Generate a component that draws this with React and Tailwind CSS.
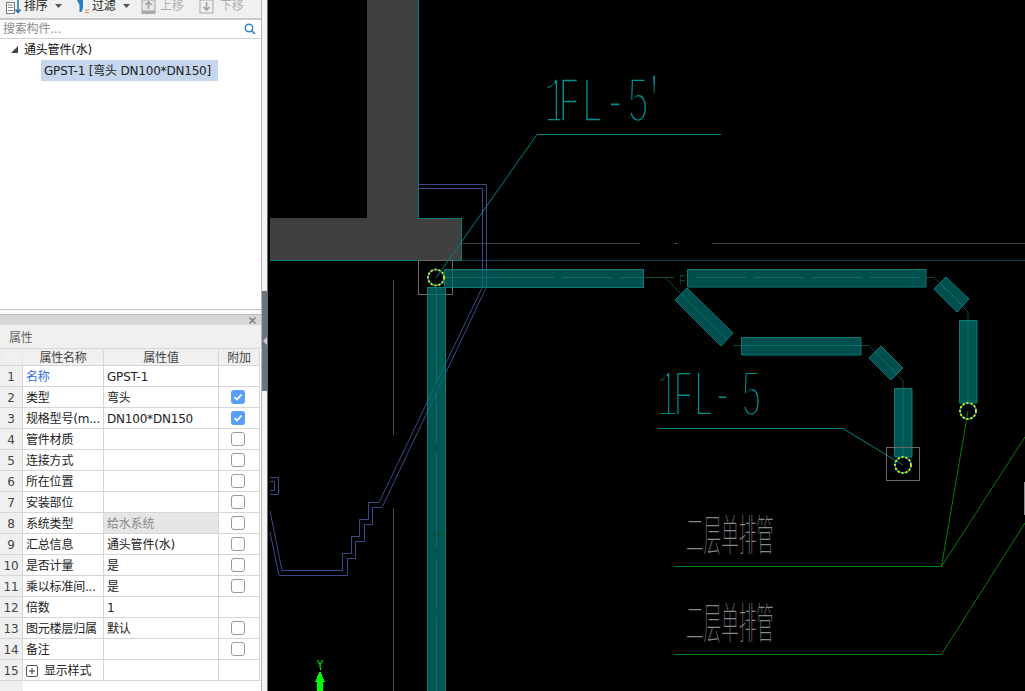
import React from "react";

const FONT = { fontFamily: '"DejaVu Sans","Noto Sans CJK SC",sans-serif', letterSpacing: "-0.2px" };

const rows = [
  ["1", "名称", "GPST-1", null, true],
  ["2", "类型", "弯头", true],
  ["3", "规格型号(m...", "DN100*DN150", true],
  ["4", "管件材质", "", false],
  ["5", "连接方式", "", false],
  ["6", "所在位置", "", false],
  ["7", "安装部位", "", false],
  ["8", "系统类型", "给水系统", false, false, true],
  ["9", "汇总信息", "通头管件(水)", false],
  ["10", "是否计量", "是", false],
  ["11", "乘以标准间...", "是", false],
  ["12", "倍数", "1", null],
  ["13", "图元楼层归属", "默认", false],
  ["14", "备注", "", false],
  ["15", "显示样式", "", null],
];

function Check({ on }) {
  if (on)
    return (
      <span className="flex h-[14px] w-[14px] items-center justify-center rounded-[3px] bg-[#5ba0f8]">
        <svg width="10" height="10" viewBox="0 0 10 10"><path d="M1.5 5.2 4 7.5 8.5 2.5" fill="none" stroke="#fff" strokeWidth="1.8" /></svg>
      </span>
    );
  return <span className="block h-[14px] w-[14px] rounded-[3px] border border-[#999] bg-white" />;
}

function Toolbar() {
  return (
    <div className="h-[20px] shrink-0 overflow-hidden border-b-2 border-[#c9c9c9] bg-[#f0f0f0] text-[12px] text-[#222]">
      <div className="-mt-[3px] flex h-[18px] items-center">
        <svg className="ml-[5px]" width="17" height="18" viewBox="0 0 17 18">
          <rect x="1.5" y="5.5" width="8" height="11" fill="#fff" stroke="#777" />
          <path d="M3 13.5h5M3 10.5h5M3 8h5" stroke="#888" />
          <path d="M13 3v12M10.5 12.5 13 15.5l2.5-3" fill="none" stroke="#2a6fb0" strokeWidth="1.5" />
        </svg>
        <span className="ml-[2px] w-[24px]">排序</span>
        <svg className="ml-[7px]" width="7" height="4" viewBox="0 0 7 4"><path d="M0 0h7L3.5 4z" fill="#555" /></svg>
        <svg className="ml-[15px]" width="13" height="18" viewBox="0 0 13 18">
          <path d="M0 3h6v8l-1.5 4h-2V8z" fill="#2a7fc0" />
          <path d="M8 13h4M8 15.5h4" stroke="#e08a30" />
        </svg>
        <span className="ml-[2px] w-[24px]">过滤</span>
        <svg className="ml-[7px]" width="7" height="4" viewBox="0 0 7 4"><path d="M0 0h7L3.5 4z" fill="#555" /></svg>
        <svg className="ml-[11px]" width="15" height="18" viewBox="0 0 15 18">
          <rect x="1" y="3" width="13" height="11" fill="#e6e6e6" stroke="#a8a8a8" />
          <path d="M7.5 12V5M4.5 8l3-3 3 3" fill="none" stroke="#a0a0a0" strokeWidth="1.6" />
          <rect x="0.5" y="14" width="14" height="3" fill="#a8a8a8" />
        </svg>
        <span className="ml-[4px] w-[24px] text-[#b0b0b0]">上移</span>
        <svg className="ml-[15px]" width="15" height="18" viewBox="0 0 15 18">
          <rect x="1" y="3" width="13" height="13" fill="#eee" stroke="#a8a8a8" />
          <path d="M7.5 5v8M4.5 10l3 3 3-3" fill="none" stroke="#a0a0a0" strokeWidth="1.6" />
        </svg>
        <span className="ml-[6px] w-[24px] text-[#b0b0b0]">下移</span>
      </div>
    </div>
  );
}

function TopPanel() {
  return (
    <div className="flex h-[310px] shrink-0 flex-col border-b border-[#c4c4c4] bg-white">
      <Toolbar />
      <div className="flex h-[19px] shrink-0 items-center justify-between border-b border-[#d0d0d0] pl-[3px] pr-[5px] text-[12px] text-[#8a8a8a]">
        <span>搜索构件...</span>
        <svg width="12" height="12" viewBox="0 0 12 12"><circle cx="5" cy="5" r="3.7" fill="none" stroke="#2d86c4" strokeWidth="1.5" /><path d="M7.8 7.8 11 11" stroke="#2d86c4" strokeWidth="1.7" /></svg>
      </div>
      <div className="flex h-[21px] items-center pl-[11px] text-[12px] text-[#111]">
        <svg width="7" height="7" viewBox="0 0 7 7"><path d="M7 0v7H0z" fill="#444" /></svg>
        <span className="ml-[6px]">通头管件(水)</span>
      </div>
      <div className="ml-[41px] flex h-[21px] w-[177px] items-center whitespace-nowrap bg-[#c5d6ee] pl-[3px] text-[12px] text-[#222]">
        GPST-1 [弯头 DN100*DN150]
      </div>
    </div>
  );
}

function PropRow({ r }) {
  const [n, name, val, chk, blue, shade] = r;
  return (
    <div className="flex h-[21px] border-b border-[#d6d6d6] text-[12px] text-[#222]">
      <div className="flex w-[23px] shrink-0 items-center justify-center border-r border-[#d6d6d6] bg-[#f0f0f0] pt-[2px] text-[#444]">{n}</div>
      <div className={"flex w-[81px] shrink-0 items-center overflow-hidden whitespace-nowrap border-r border-[#d6d6d6] pl-[3px] pt-[2px] " + (blue ? "text-[#2f6fe0]" : "")}>
        {n === "15" && (
          <span className="mr-[6px] flex h-[12px] w-[12px] items-center justify-center rounded-[2px] border border-[#555]">
            <svg width="6" height="6" viewBox="0 0 6 6"><path d="M3 0v6M0 3h6" stroke="#333" /></svg>
          </span>
        )}
        {name}
      </div>
      <div className={"flex w-[115px] shrink-0 items-center whitespace-nowrap border-r border-[#d6d6d6] pl-[3px] pt-[2px] " + (shade ? "bg-[#e6e6e6] text-[#8a8a8a]" : "")}>{val}</div>
      <div className="flex w-[41px] shrink-0 items-center justify-center border-r border-[#d6d6d6] pr-[2px]">
        {chk !== null && chk !== undefined && <Check on={chk} />}
      </div>
    </div>
  );
}

function PropPanel() {
  return (
    <div className="flex min-h-0 flex-1 flex-col bg-white">
      <div className="flex h-[11px] shrink-0 items-center justify-end border-t border-[#bdbdbd] bg-[#d4d6d8] pr-[5px]">
        <svg width="7" height="7" viewBox="0 0 7 7"><path d="M.5.5l6 6M6.5.5l-6 6" stroke="#777" strokeWidth="1.3" /></svg>
      </div>
      <div className="flex h-[23px] shrink-0 items-center bg-[#f0f0f0] pl-[9px] pt-[2px] text-[12px] text-[#666]">属性</div>
      <div className="flex min-h-0 flex-1 bg-white">
        <div className="w-[260px] shrink-0">
          <div className="flex h-[18px] border-b border-t border-[#d6d6d6] bg-[#f0f0f0] pt-[1px] text-[12px] text-[#444]">
            <div className="ml-[1px] w-[22px] shrink-0 border-r border-l border-[#e8e8e8]" />
            <div className="flex w-[81px] shrink-0 items-center justify-center border-r border-[#d6d6d6]">属性名称</div>
            <div className="flex w-[115px] shrink-0 items-center justify-center border-r border-[#d6d6d6]">属性值</div>
            <div className="flex w-[41px] shrink-0 items-center justify-center border-r border-[#d6d6d6]">附加</div>
          </div>
          {rows.map((r) => <PropRow key={r[0]} r={r} />)}
          <div className="h-[11px] w-[23px] bg-[#f0f0f0]" />
        </div>
      </div>
    </div>
  );
}

const TEAL = "#008080";
const DARK = "#0a4a32";
const BLUE = "#3b4a86";

function Pipe({ pts, center, dash, fill }) {
  return (
    <>
      <polygon points={pts} fill={fill || "#007070"} fillOpacity="0.7" stroke="#0b7d78" />
      <polyline points={center} fill="none" stroke="#0a7068" strokeDasharray={dash} />
    </>
  );
}

function Ring({ x, y }) {
  return (
    <>
      <circle cx={x} cy={y} r="8" fill="none" stroke="#008080" strokeWidth="1.6" />
      <circle cx={x} cy={y} r="8" fill="none" stroke="#ffff00" strokeWidth="1.6" strokeDasharray="2 2" />
    </>
  );
}

function CadMono({ xs, y, size, sx, sy, children }) {
  return (
    <text
      transform={`translate(0 ${y}) scale(${sx} ${sy})`}
      x={xs.map((v) => v / sx).join(" ")}
      fontSize={size}
      fill="#009090"
      stroke="#000"
      strokeWidth="3.4"
      style={{ fontFamily: '"Liberation Mono",monospace', paintOrder: "fill", letterSpacing: 0 }}
    >
      {children}
    </text>
  );
}

function CadHan({ x, y, children }) {
  return (
    <text
      transform={`translate(${x} ${y}) scale(0.44 1.08)`}
      fontSize={40}
      fill="#8a8a8a"
      style={{ fontFamily: '"Noto Sans CJK SC",sans-serif', fontWeight: 100, letterSpacing: 0 }}
    >
      {children}
    </text>
  );
}

function Canvas() {
  return (
    <div className="relative min-w-0 flex-1 bg-black">
      <svg className="block" width="757" height="691" viewBox="268 0 757 691" shapeRendering="crispEdges">
        <polygon points="367,-2 367,218 270,218 270,261 462,261 462,218 419,218 419,-2" fill="#404040" />
        <polyline points="418.5,-2 418.5,218.5 461.5,218.5 461.5,260.5 270,260.5" fill="none" stroke={TEAL} />
        <line x1="462" y1="243.5" x2="640" y2="243.5" stroke="#404040" />
        <line x1="674" y1="243.5" x2="678" y2="243.5" stroke="#404040" />
        <line x1="712" y1="243.5" x2="1025" y2="243.5" stroke="#404040" />
        <line x1="462" y1="260.5" x2="1025" y2="260.5" stroke="#003f50" />
        <line x1="393.5" y1="280" x2="393.5" y2="435" stroke="#444" />
        <line x1="393.5" y1="508" x2="393.5" y2="691" stroke="#444" />

        <g shapeRendering="auto" fill="none" stroke={BLUE}>
          <polyline points="418,188.5 482.5,188.5 482.5,287 379,502.5 368.5,502.5 368.5,519.5 359.5,519.5 359.5,536.5 351.5,536.5 351.5,553.5 342.5,553.5 342.5,570.5 282,570.5 270,511" />
          <polyline points="418,184.5 486.5,184.5 486.5,287 382,507.5 372.5,507.5 372.5,524.5 364.5,524.5 364.5,541.5 355.5,541.5 355.5,558.5 347.5,558.5 347.5,575.5 279,575.5 270,532" />
          <polyline points="270,477.5 278.5,477.5 278.5,494.5 270,494.5" />
          <polyline points="270,481.5 274.5,481.5 274.5,490.5 270,490.5" />
        </g>

        <rect x="418.5" y="260.5" width="34" height="34" fill="none" stroke="#6b6b6b" />
        <Pipe pts="444.5,269.5 643,269.5 643,287 444.5,287" center="444,277.5 643,277.5" dash="110 8 50 8 60 8" />
        <Pipe pts="427.5,287 445,287 445,700 427.5,700" center="436.5,287 436.5,700" dash="95 12 50 8" fill="#007a76" />

        <g shapeRendering="auto">
          <polyline points="436,278 537,134.5 721,134.5" fill="none" stroke={TEAL} />
          <polyline points="658,428.5 843,428.5 903,465" fill="none" stroke={TEAL} />
          <polyline points="643,277.5 674,277.5" fill="none" stroke={DARK} />
          <polyline points="665,277.5 680,293" fill="none" stroke={DARK} />
          <polyline points="733,345.5 741,345.5" fill="none" stroke={DARK} />
          <polyline points="861,345.5 869,345.5 881,358" fill="none" stroke={DARK} />
          <polyline points="891,369 903,381 903,388" fill="none" stroke={DARK} />
          <polyline points="926,277.5 934,277.5 946,290" fill="none" stroke={DARK} />
          <polyline points="957,301 968,312 968,320" fill="none" stroke={DARK} />

          <Pipe pts="687.5,269.5 926,269.5 926,287 687.5,287" center="696,277.5 926,277.5" dash="50 8 50 8 " />
          <Pipe pts="675,300 687,288 733,333 721,346" center="681,294 727,339.5" />
          <Pipe pts="741.5,337.5 861,337.5 861,355 741.5,355" center="741,345.5 861,345.5" />
          <Pipe pts="869,358 881,346 903,368 891,380" center="875,352 897,374" />
          <Pipe pts="894.5,388.5 912,388.5 912,457 894.5,457" center="903,388 903,457" fill="#007a76" />
          <Pipe pts="934,289 946,277 969,299 957,312" center="940,283 963,305.5" />
          <Pipe pts="959.5,320.5 977,320.5 977,403 959.5,403" center="968,320 968,403" fill="#007a76" />

          <polyline points="968,411 941.5,566.5 674,566.5" fill="none" stroke="#008000" />
          <polyline points="1025,437 941.5,566.5" fill="none" stroke="#008000" />
          <polyline points="1025,523 941.5,654.5 674,654.5" fill="none" stroke="#008000" />
          <Ring x={436} y={277.5} />
          <Ring x={903} y={465} />
          <Ring x={968} y={411} />
        </g>
        <rect x="886.5" y="447.5" width="33" height="33" fill="none" stroke="#6b6b6b" />
        <rect x="1024" y="482" width="1" height="33" fill="#888" />

        <text x="679" y="285" fontSize="14" fill={DARK} style={{ fontFamily: '"Liberation Sans",sans-serif', letterSpacing: 0 }} transform="translate(272 0) scale(0.6 1)">F</text>
        <text transform="translate(444 537) rotate(-90) scale(0.7 1)" fontSize="13" fill={DARK} style={{ fontFamily: '"Liberation Sans",sans-serif', letterSpacing: 0 }}>F</text>

        <CadMono xs={[544, 558, 581, 604, 627, 643]} y={122} size={62} sx={0.6} sy={1.08}>1FL-5′</CadMono>
        <CadMono xs={[657, 673, 693, 712, 741]} y={416} size={60} sx={0.58} sy={1.13}>1FL-5</CadMono>
        <CadHan x={686} y={551}>二层单排管</CadHan>
        <CadHan x={686} y={639}>二层单排管</CadHan>

        <text x="320" y="668" fontSize="10" textAnchor="middle" fill="#00ff00" style={{ fontFamily: '"Liberation Sans",sans-serif', letterSpacing: 0 }}>Y</text>
        <line x1="320" y1="668" x2="320" y2="670" stroke="#00ff00" />
        <polygon points="320,671 325,682 315,682" fill="#00ff00" />
        <rect x="317" y="682" width="6" height="9" fill="#00ff00" />
      </svg>
    </div>
  );
}

export default function App() {
  return (
    <div className="flex h-[691px] w-[1025px] overflow-hidden bg-black" style={FONT}>
      <div className="flex w-[262px] shrink-0 flex-col border-r border-[#b5b5b5] bg-white">
        <TopPanel />
        <div className="h-[4px] shrink-0 bg-[#fafafa]" />
        <PropPanel />
      </div>
      <div className="flex w-[6px] shrink-0 flex-col border-r border-[#6a6a6a] bg-[#f5f5f5]">
        <div className="mt-[291px] flex h-[100px] items-center justify-center bg-[#6b7580]">
          <svg width="4" height="8" viewBox="0 0 4 8"><path d="M4 0v8L0 4z" fill="#ccc" /></svg>
        </div>
      </div>
      <Canvas />
    </div>
  );
}
